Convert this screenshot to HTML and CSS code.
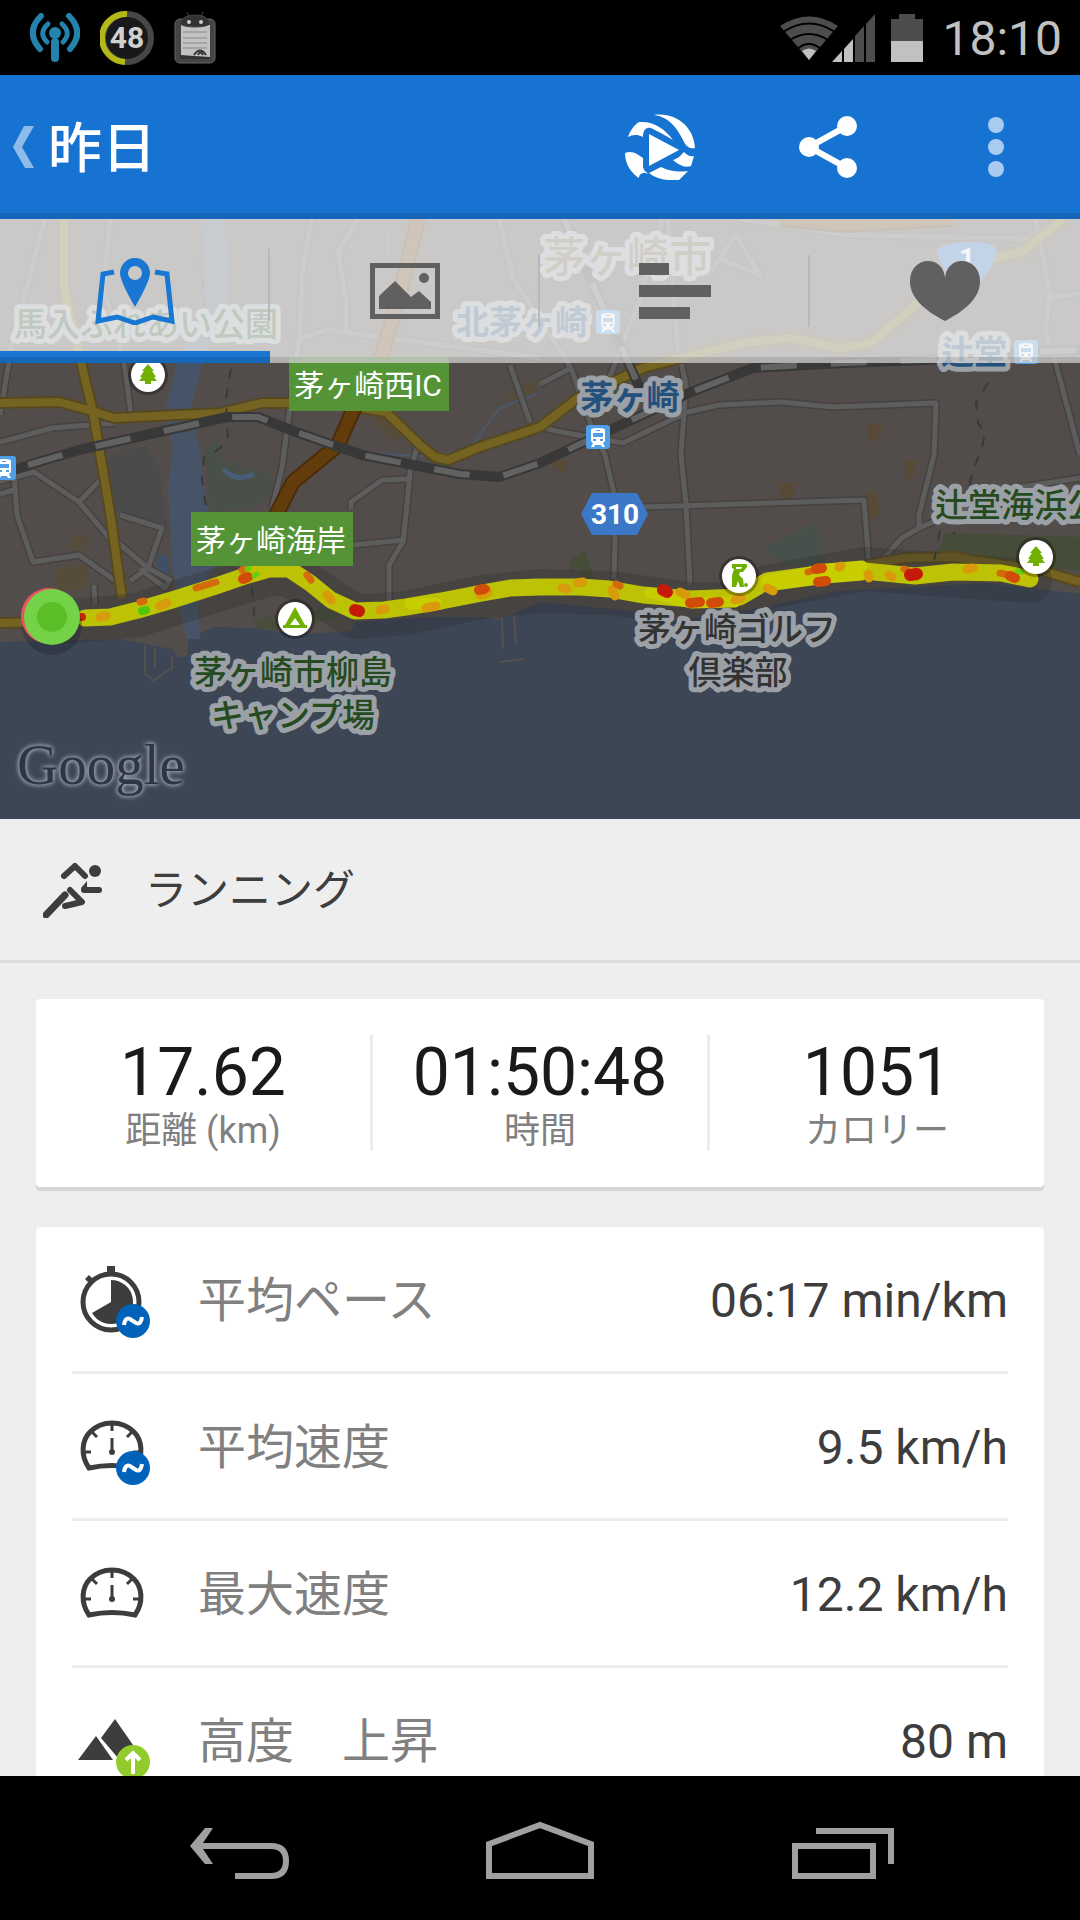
FILE: index.html
```
<!DOCTYPE html>
<html lang="ja">

<head>
  <meta charset="UTF-8">
  <meta name="viewport" content="width=device-width, initial-scale=1">
  <title>ランニング</title>
  <link rel="stylesheet" href="styles.css">
</head>

<body>

  <div class="statusbar">
    <div class="notifications">
      <svg width="50" height="50" viewBox="0 0 50 50" fill="none" stroke="#2483ad" stroke-linecap="round">
        <circle cx="25" cy="20" r="6" fill="#2483ad" stroke="none" />
        <path d="M25 29V45" stroke-width="8" />
        <path d="M18 11Q8 20 17 29M32 11Q42 20 33 29" stroke-width="5" />
        <path d="M11 3Q-5 19 10 36M39 3Q55 19 40 36" stroke-width="6" />
      </svg>
      <svg width="54" height="54" viewBox="0 0 54 54">
        <circle cx="27" cy="27" r="24" fill="#191919" stroke="#484648" stroke-width="6" />
        <path d="M27 3A24 24 0 0 0 25 51" fill="none" stroke="#b3b717" stroke-width="6" />
        <text class="battery-count" x="27" y="37" text-anchor="middle">48</text>
      </svg>
      <svg width="42" height="52" viewBox="0 0 42 52">
        <rect x="1" y="7" width="40" height="44" rx="5" fill="#444" stroke="#666" />
        <path d="M7 13h29v32H7z" fill="#c2c2c2" />
        <path d="M6 12Q8 3 21 3T36 12Q32 15 21 15T6 12ZM13 0l2 5M29 0l-2 5" fill="#333" stroke="#444" />
        <circle cx="15" cy="10" r="2" fill="#ccc" />
        <circle cx="27" cy="10" r="2" fill="#ccc" />
        <path d="M9 20h24M9 26h24M9 31h24M9 36h24" stroke="#888" />
        <path d="M20 43Q26 34 32 43M24 43Q26 38 29 43" fill="none" stroke="#333" stroke-width="2" />
        <path d="M6 43l30 2v2H6z" fill="#333" />
      </svg>
    </div>
    <div class="system">
      <svg width="96" height="48" viewBox="0 0 96 48">
        <path d="M29 46L0 12Q29 -7 58 12Z" fill="#4d4d4d" />
        <path d="M3 18Q29 1 55 18M10 26Q29 14 48 26M17 35Q29 25 41 35" fill="none" stroke="#000" stroke-width="2" />
        <path d="M29 46l-7-9q7-5 14 0z" fill="#c1c1c1" />
        <path d="M52 48l10-11v11zM64 48V35l9-10v23z" fill="#c1c1c1" />
        <path d="M75 48V22l9-10v36zM86 48V10l9-10v48z" fill="#4d4d4d" />
      </svg>
      <svg width="32" height="48" viewBox="0 0 32 48">
        <path d="M8 0h16v5h8v43H0V5h8z" fill="#4d4d4d" />
        <path d="M0 27h32v21H0z" fill="#c1c1c1" />
      </svg>
      <span class="clock">18:10</span>
    </div>
  </div>

  <header class="actionbar">
    <button class="back" aria-label="戻る">
      <svg width="22" height="42" viewBox="0 0 22 42"><path d="M11 0h10L9 21l12 21H12L0 21z" fill="#8fbbea" /></svg>
    </button>
    <h1>昨日</h1>
    <button class="action" aria-label="再生">
      <svg width="70" height="66" viewBox="0 0 70 66" fill="#fff">
        <path d="M29 1C51-2 69 13 70 34C65 35 61 33 58 26C51 12 43 3 29 1Z" />
        <path d="M3 23C5 17 9 11 14 8C29 7 40 15 48 26C40 21 32 17 26 14C20 13 18 17 18 23C12 20 7 21 3 23Z" />
        <path d="M0 39C8 36 13 41 18 44V53C19 57 21 58 24 60C19 58 14 59 14 64C6 59 0 50 0 39Z" />
        <path d="M24 59L36 53C46 58 54 58 63 57L54 66C42 67 31 65 24 59Z" />
        <path d="M48 46C54 44 56 41 59 38C62 41 65 43 69 42L66 52C59 54 54 51 48 46Z" />
        <path d="M24 20L54 36L24 52Z" />
      </svg>
    </button>
    <button class="action" aria-label="共有">
      <svg width="58" height="62" viewBox="0 0 58 62" fill="#fff">
        <path d="M48 10L10 31L48 52" fill="none" stroke="#fff" stroke-width="6" />
        <circle cx="48" cy="10" r="10" /><circle cx="10" cy="31" r="10" /><circle cx="48" cy="52" r="10" />
      </svg>
    </button>
    <button class="action" aria-label="メニュー">
      <svg width="16" height="60" viewBox="0 0 16 60" fill="#a9cbf1">
        <circle cx="8" cy="8" r="8" /><circle cx="8" cy="30" r="8" /><circle cx="8" cy="52" r="8" />
      </svg>
    </button>
  </header>

  <main>
    <section class="map">
      <svg class="map-canvas" viewBox="0 0 1080 600">
        <defs>
          <g id="train">
            <rect width="24" height="24" rx="3" fill="#4f9fe8" />
            <path d="M5 5q0-2 7-2t7 2v11l-2 2l2 4h-3l-1-2H9l-1 2H5l2-4l-2-2z" fill="#fff" />
            <path d="M7 8h10v4H7zM7 14h3v2H7zM14 14h3v2h-3zM10 5h4v1h-4z" fill="#4f9fe8" />
          </g>
          <g id="pin">
            <circle r="20" fill="#000" opacity=".3" />
            <circle r="17" fill="#fff" />
          </g>
          <path id="tree" d="M0-11L6-4H4L8 2H6L9 6H3V9H-3V6H-9L-6 2H-8L-4-4H-6Z" fill="#6fb000" />
          <g id="roads">
            <path d="M45 0L33 46L14 113L0 196M110 0L104 70L124 143L131 196M312 0L303 46L300 113L289 196L282 249L272 289" />
            <path d="M0 223L52 209L114 204M358 0L338 33L346 83V113M300 119L327 111L540 139M499 0L513 59L571 149L592 209L605 236L616 283L614 359" />
            <path d="M510 146L530 203M417 229L410 253L406 296L403 323L389 346V384M351 290V283L382 261L410 260M353 326L403 321" />
            <path d="M0 262L34 253L79 283L102 259M79 283L110 320M0 275L16 270M14 255L17 296L33 343L79 336L117 363M117 323L148 349L170 361L165 369L140 350M120 296L162 309L148 349L130 362M94 366L95 386" />
            <path d="M668 0L678 129L686 166L681 236L686 286L690 366M540 208L561 213L623 224L654 209L688 193L719 186L781 183L833 188L936 184L934 236L919 296" />
            <path d="M643 288L864 281L869 346M877 346L902 319L919 309L1015 269L1080 259M919 296V309M1036 0L1050 76L1045 110L1057 149L1080 236M1050 78L1080 75" />
            <path d="M712 52L736 16L760 56L719 39M609 160L640 80L662 0M540 165L571 149M740 0L850 16L1030 20" />
          </g>
          <path id="highways" d="M64 0V69L81 143L93 193L110 293L122 379M0 184L59 183L85 190L114 199L220 194L262 184H330L386 193L420 226L435 238L448 241L480 228L540 208L578 179L643 149L685 138L747 123L791 119L840 129L871 124L919 83L953 49L1022 33L1063 0M0 404L48 403M867 346L905 339L953 338L1039 351L1080 363" />
          <path id="tollways" d="M418 0L403 63L382 136L351 196L338 226L293 263L276 296M781 0L843 6L953 0" />
          <path id="railway" d="M28 246L79 231L155 214L227 198H258L296 213L362 236L413 246L460 255L499 258L540 244L578 226L636 199L691 173L753 149L843 144L926 141L1022 133L1080 131M564 0L602 86L643 176" />
        </defs>

        <!-- land, sea, river -->
        <rect width="1080" height="600" fill="#524d4a" />
        <path d="M0 423L120 420L143 425L172 430L179 439L187 437L188 419L215 408L255 409L296 416L351 412L355 403L430 398L482 398L499 401L540 383L643 393L671 403L691 399L760 389L836 372L988 364L1080 375V600H0Z" fill="#3c4655" />
        <path d="M201 0L206 60L200 100L177 143L165 193L173 229L168 270L172 346L186 420H200L197 375L213 350L208 296L200 229L190 193L203 143L227 80L229 40L224 0Z" fill="#475468" />
        <path d="M125 230L146 228L160 250L164 296L172 315L150 310L110 290L107 240Z" fill="#4a4b4a" />
        <path d="M205 230L218 220L222 240L270 255L278 270L250 290L210 293Z" fill="#485048" />
        <path d="M224 250q10 14 30 5" fill="none" stroke="#475e78" stroke-width="5" />
        <path d="M77 313l14 6-10 16-14-6zM55 350l35-5-5 25-28 3zM370 200l20-10 20 15-15 20zM510 170l28-9v15l-30 6z" fill="#574c38" opacity=".8" />
        <path d="M867 205h15v12l-14 6zM905 241h10v15l-10 6zM780 264h17l-5 14-13 6zM862 276l13-5 5 25-15 10zM550 245l20-5-8 15z" fill="#584a37" />
        <path d="M768 327L816 304L826 346L790 348L768 335Z" fill="#47504a" />
        <path d="M569 342l16-11 8 28-12 4-2-15-8 7zM945 314L1080 318V351L1040 350L938 332Z" fill="#454c38" />
        <path d="M255 400L330 389L340 396L290 412L255 409Z" fill="#484e3b" />
        <path d="M158 337h9l3 17h-12z" fill="#3e4f68" />
        <path d="M385 0q8 40 0 60M350 233l70 4l50-5q18-30 30-43l38-15" fill="none" stroke="#4b586b" stroke-width="2" />

        <g fill="none" stroke-linejoin="round">
          <!-- roads -->
          <use href="#roads" stroke="#45423f" stroke-width="8" />
          <use href="#roads" stroke="#5d5d5d" stroke-width="5" />
          <use href="#highways" stroke="#57491f" stroke-width="12" />
          <use href="#highways" stroke="#756322" stroke-width="8" />
          <use href="#tollways" stroke="#4a2c0a" stroke-width="16" />
          <use href="#tollways" stroke="#633c0b" stroke-width="12" />

          <!-- railway -->
          <path d="M0 255L30 246" stroke="#383838" stroke-width="10" />
          <use href="#railway" stroke="#383838" stroke-width="10" />
          <use href="#railway" stroke="#626262" stroke-width="6" stroke-dasharray="36 34" />
          <path d="M231 150L226 180L228 222L216 232L204 238L202 260L207 296M200 40L208 120M252 368l3 40M988 164l-12 20 2 20 7 10-3 15-8 20-6 22-12 25-2 20M940 312l-6 30" stroke="#393a3c" stroke-width="2" stroke-dasharray="10 10" />
          <path d="M145 427V455L152 460M155 430V449M172 437V449L152 462M502 400L503 430M514 396L516 425M500 443l24-3" stroke="#55524e" stroke-width="2" />
        </g>

        <!-- route, coloured by pace -->
        <g fill="none" stroke-linejoin="round" stroke-linecap="round">
          <path d="M50 404L138 396L172 385L269 355H289L310 368L355 398L406 394L482 378L540 372L609 374L691 385L740 385L767 368L864 350L1030 362" stroke="#302e2e" stroke-width="44" opacity=".3" />
          <path d="M85 399L110 398L138 391L172 381L213 368L248 356L269 350H289L310 364L331 381L355 392L384 391L406 388L441 382L482 374L510 369L540 368L580 368L609 370L643 376L691 380L740 378L767 362L826 354L864 352L915 357L953 353L1001 354L1030 360" stroke="#bdc204" stroke-width="17" />
          <path d="M767 367L826 359L862 356M767 362L826 350L862 347M650 374L691 384L735 383M410 385L436 384" stroke="#c8cd00" stroke-width="11" />
          <path d="M100 398l6-1M160 387l7-3M327 376l4 5M380 391l5-1M426 389l10-2M480 376l8-2M562 369l5 1M577 364l6-1M612 371l3 6M680 373l6 3M735 381l6-2M767 369l6 3M839 348l2-1M868 355l1 4M889 356l3 2M967 350l6-1" stroke="#d79b0c" stroke-width="9" />
          <path d="M196 369l20-6M242 351l2-1M307 356l4 5M140 383l4-1M484 371l3-1M616 365l4 2M808 353l10-3M1000 354l8 2M904 350l3 1" stroke="#d46b0a" stroke-width="7" />
          <path d="M243 360l5-2M479 371l5-1M690 384l10-1M711 384l8-1M816 350l6-1M818 363l8-1M1010 357l5 2" stroke="#d04c08" stroke-width="10" />
          <path d="M355 391l4 1M663 371l4 2M910 356l7-1" stroke="#c61a08" stroke-width="12" />
          <path d="M142 392l4-1" stroke="#4fc80c" stroke-width="8" />
          <path d="M247 350l2-1M254 357l3-2M1017 352l5 1" stroke="#68cc10" stroke-width="5" />
          <path d="M80 398h2" stroke="#c92608" stroke-width="8" />
        </g>
        <circle cx="52" cy="406" r="30" fill="#1c222c" opacity=".35" />
        <circle cx="49" cy="397" r="28" fill="#ec5362" />
        <circle cx="52" cy="398" r="28" fill="#73d247" />
        <circle cx="52" cy="398" r="15" fill="#5abf27" />

        <!-- markers -->
        <use href="#train" x="-8" y="237" />
        <use href="#train" x="586" y="206" />
        <use href="#train" x="596" y="91" />
        <use href="#train" x="1014" y="121" />
        <use href="#pin" x="148" y="156" /><use href="#tree" x="148" y="156" />
        <use href="#pin" x="1036" y="338" /><use href="#tree" x="1036" y="338" />
        <use href="#pin" x="295" y="400" />
        <path d="M295 388L305 406H307V409H283V406H285ZM295 399L290 406H300Z" fill="#6fb000" fill-rule="evenodd" />
        <use href="#pin" x="739" y="357" />
        <path d="M732 345h15v3l-4 5h-3l-1 3 4 4 1 8h-4l-2-6-2 6h-4v-12l2-6-2-1zM736 348v2h5l1-2z" fill="#6fb000" fill-rule="evenodd" />
        <circle cx="746" cy="366" r="2" fill="#6fb000" />
        <path d="M592 274h45l11 21-11 21h-45l-11-21z" fill="#3b78c8" />
        <text class="shield" x="615" y="305">310</text>
        <path d="M937 34q0-10 30-11t30 11q-5 20-30 42q-25-22-30-42z" fill="#3b78c8" />
        <text class="shield" x="967" y="49">1</text>
        <rect x="289" y="138" width="160" height="54" fill="#549436" />
        <text class="exit" x="368" y="177">茅ヶ崎西IC</text>
        <rect x="191" y="293" width="162" height="54" fill="#549436" />
        <text class="exit" x="271" y="332">茅ヶ崎海岸</text>

        <!-- place names -->
        <text class="place city" x="627" y="53">茅ヶ崎市</text>
        <text class="place station" x="522" y="115">北茅ヶ崎</text>
        <text class="place station" x="630" y="190">茅ヶ崎</text>
        <text class="place station" x="974" y="145">辻堂</text>
        <text class="place park" x="146" y="117">馬入ふれあい公園</text>
        <text class="place park" x="1034" y="298">辻堂海浜公園</text>
        <text class="place park" x="293" y="465">茅ヶ崎市柳島</text>
        <text class="place park" x="293" y="508">キャンプ場</text>
        <text class="place" x="737" y="422">茅ヶ崎ゴルフ</text>
        <text class="place" x="738" y="465">倶楽部</text>
        <text class="google" x="17" y="565">Google</text>
      </svg>

      <nav class="tabs">
        <button class="tab active" aria-label="マップ">
          <svg width="80" height="68" viewBox="0 0 80 68">
            <path d="M19 15L8 17L3 64L22 60L40 66L58 60L77 64L72 17L60 15" fill="none" stroke="#1976d2" stroke-width="5" />
            <path d="M40 1a15 15 0 0 1 15 15q0 8-15 34q-15-26-15-34a15 15 0 0 1 15-15zm0 8a7 7 0 1 0 0 14a7 7 0 1 0 0-14z" fill="#1976d2" fill-rule="evenodd" />
          </svg>
        </button>
        <button class="tab" aria-label="写真">
          <svg width="70" height="56" viewBox="0 0 70 56" fill="#606060">
            <path d="M0 0h70v56H0zM5 5v46h60V5z" fill-rule="evenodd" />
            <path d="M9 46V33L25 18L41 34L49 28L61 39V46z" />
            <circle cx="54" cy="15" r="5" />
          </svg>
        </button>
        <button class="tab" aria-label="統計">
          <svg width="72" height="56" viewBox="0 0 72 56" fill="#606060">
            <path d="M0 0h30v12H0zM0 22h72v12H0zM0 44h51v12H0z" />
          </svg>
        </button>
        <button class="tab" aria-label="心拍">
          <svg width="70" height="60" viewBox="0 0 70 60" fill="#606060">
            <path d="M35 60C20 52 0 40 0 20C0 8 8 0 18 0C27 0 34 6 35 17C36 6 43 0 52 0C62 0 70 8 70 20C70 40 50 52 35 60Z" />
          </svg>
        </button>
      </nav>
    </section>

    <section class="sport">
      <svg width="60" height="56" viewBox="0 0 60 56" fill="none" stroke="#3d3d3d" stroke-width="6" stroke-linecap="round" stroke-linejoin="round">
        <path d="M21 14L32 4L42 14M27 28L39 40L22 44" />
        <path d="M41 28H56" />
        <path d="M3 53L22 33" stroke-width="7" />
        <path d="M38 26l6-7v12z" fill="#3d3d3d" stroke="none" />
        <circle cx="52" cy="9" r="6" fill="#3d3d3d" stroke="none" />
      </svg>
      <h2>ランニング</h2>
    </section>

    <section class="card summary">
      <div class="stat"><strong>17.62</strong><span>距離 (km)</span></div>
      <div class="stat"><strong>01:50:48</strong><span>時間</span></div>
      <div class="stat"><strong>1051</strong><span>カロリー</span></div>
    </section>

    <section class="card">
      <table class="details">
        <tr>
          <td class="icon">
            <svg width="80" height="80" viewBox="0 0 80 80">
              <circle cx="39" cy="43" r="28" fill="none" stroke="#3d3d3d" stroke-width="5" />
              <path d="M35 7h8v8h-8zM13 20l4-4 5 5-4 4z" fill="#3d3d3d" />
              <path d="M39 43V21A22 22 0 1 1 20 54Z" fill="#3d3d3d" />
              <g id="average">
                <circle cx="61" cy="62" r="17" fill="#0062b8" />
                <path d="M52 66Q53 58 58 60L64 64Q69 66 70 58" fill="none" stroke="#fff" stroke-width="4" />
              </g>
            </svg>
          </td>
          <th>平均ペース</th>
          <td class="value">06:17 min/km</td>
        </tr>
        <tr>
          <td class="icon">
            <svg width="80" height="80" viewBox="0 0 80 80">
              <g id="gauge" fill="none" stroke="#3d3d3d">
                <path d="M17 62C8 49 10 34 18 26C30 14 50 14 62 26C70 34 72 49 63 62Q40 57 17 62Z" stroke-width="5" />
                <path d="M40 18v7M20 26l5 5M60 26l-5 5M11 46h8M69 46h-8M40 32v14" stroke-width="3" />
                <circle cx="40" cy="46" r="3" fill="#3d3d3d" stroke="none" />
              </g>
              <use href="#average" />
            </svg>
          </td>
          <th>平均速度</th>
          <td class="value">9.5 km/h</td>
        </tr>
        <tr>
          <td class="icon">
            <svg width="80" height="80" viewBox="0 0 80 80"><use href="#gauge" /></svg>
          </td>
          <th>最大速度</th>
          <td class="value">12.2 km/h</td>
        </tr>
        <tr>
          <td class="icon">
            <svg width="80" height="80" viewBox="0 0 80 80">
              <path d="M6 60L24 36L41 60ZM43 19L70 58H46L29 38Z" fill="#3d3d3d" />
              <circle cx="61" cy="62" r="17" fill="#91cc2c" />
              <path d="M61 74V54M54 60L61 53L68 60" fill="none" stroke="#fff" stroke-width="4" />
            </svg>
          </td>
          <th>高度　上昇</th>
          <td class="value">80 m</td>
        </tr>
      </table>
    </section>
  </main>

  <footer class="navbar">
    <button aria-label="戻る">
      <svg width="100" height="58" viewBox="0 0 100 58" fill="none" stroke="#a0a0a0" stroke-width="6">
        <path d="M4 25H81Q96 25 96 40T81 55H45" />
        <path d="M15 7h8L11 25l12 18h-8L0 25z" fill="#a0a0a0" stroke="none" />
      </svg>
    </button>
    <button aria-label="ホーム">
      <svg width="108" height="58" viewBox="0 0 108 58" fill="none" stroke="#a0a0a0" stroke-width="6">
        <path d="M3 55V23L54 4L105 23V55Z" />
      </svg>
    </button>
    <button aria-label="履歴">
      <svg width="108" height="58" viewBox="0 0 108 58" fill="none" stroke="#a0a0a0" stroke-width="6">
        <path d="M9 25H87V55H9ZM30 10H105V43" />
      </svg>
    </button>
  </footer>

</body>

</html>
```

FILE: styles.css
```
* {
  box-sizing: border-box;
}

body {
  margin: 0;
  height: 100vh;
  display: flex;
  flex-direction: column;
  background-color: #eee;
  color: #3d3d3d;
  font-family: Roboto, "Noto Sans CJK JP", sans-serif;
}

svg {
  display: block;
}

button {
  display: flex;
  align-items: center;
  justify-content: center;
  padding: 0;
  border: 0;
  background: none;
}

/* status bar */
.statusbar {
  flex: none;
  display: flex;
  justify-content: space-between;
  align-items: center;
  height: 75px;
  padding: 0 18px 0 30px;
  background-color: #000;
}

.notifications {
  display: flex;
  align-items: center;
  gap: 20px;
}

.battery-count {
  fill: #d0d0d0;
  font-size: 30px;
  font-weight: bold;
}

.system {
  display: flex;
  align-items: center;
  gap: 15px;
}

.clock {
  padding-top: 3px;
  margin-left: 4px;
  color: #c1c1c1;
  font-size: 48px;
  line-height: 72px;
}

/* action bar */
.actionbar {
  flex: none;
  display: flex;
  align-items: stretch;
  height: 144px;
  background-color: #1773d1;
  border-bottom: 6px solid #1565bb;
}

.back {
  width: 48px;
  padding-top: 6px;
}

h1 {
  flex: 1;
  margin: 0;
  padding-top: 6px;
  color: #fff;
  font-size: 54px;
  font-weight: 500;
  line-height: 138px;
}

.action {
  width: 168px;
  padding-top: 6px;
}

main {
  flex: 1;
  min-height: 0;
  overflow: hidden;
}

/* map */
.map {
  position: relative;
}

.map-canvas {
  width: 100%;
  height: auto;
}

.place {
  fill: #333;
  stroke: #9ca1a8;
  stroke-width: 10px;
  stroke-linejoin: round;
  paint-order: stroke;
  font-size: 33px;
  font-weight: 500;
  text-anchor: middle;
}

.park {
  fill: #264b21;
}

.station {
  fill: #24507c;
  font-weight: 700;
}

.city {
  fill: #6b6149;
  font-size: 42px;
}

.exit {
  fill: #fff;
  font-size: 30px;
  text-anchor: middle;
}

.shield {
  fill: #fff;
  font-size: 28px;
  font-weight: bold;
  text-anchor: middle;
}

/* the logo has a light glow */
.google {
  fill: #2d3644;
  font-family: "Liberation Serif", serif;
  font-size: 57px;
  filter: drop-shadow(0 0 2px #aab0b9) drop-shadow(0 0 2px #8a919c);
}

.tabs {
  position: absolute;
  top: 0;
  left: 0;
  right: 0;
  display: flex;
  height: 144px;
  background-color: rgba(243, 243, 243, 0.75);
}

.tabs::after {
  content: "";
  position: absolute;
  left: 0;
  right: 0;
  bottom: 0;
  height: 6px;
  background-color: rgba(0, 0, 0, 0.12);
}

.tab {
  flex: 1;
  background: linear-gradient(#b9b8b8, #b9b8b8) right center / 2px 72px no-repeat;
}

.tab:last-child {
  background: none;
}

.tab.active {
  padding-top: 12px;
  border-bottom: 12px solid #1976d2;
}

/* sport type */
.sport {
  display: flex;
  align-items: center;
  gap: 42px;
  height: 144px;
  padding-left: 43px;
  border-bottom: 3px solid #dcdcdc;
}

h2 {
  margin: 0;
  padding-top: 2px;
  font-size: 42px;
  font-weight: normal;
  line-height: 60px;
}

/* cards */
.card {
  margin: 36px 36px 0;
  background-color: #fff;
  border-radius: 4px;
  box-shadow: 0 4px 0 #d6d6d6;
}

.card + .card {
  margin-top: 40px;
}

.summary {
  display: flex;
  padding: 36px 0;
}

.stat {
  flex: 1;
  display: flex;
  flex-direction: column;
  align-items: center;
}

.stat + .stat {
  border-left: 3px solid #ededed;
}

.stat strong {
  color: #1a1a1a;
  font-size: 66px;
  font-weight: normal;
  line-height: 76px;
}

.stat span {
  color: #808080;
  font-size: 36px;
  line-height: 40px;
}

.details {
  width: calc(100% - 72px);
  margin: 0 36px;
  border-collapse: separate;
  border-spacing: 0;
  font-size: 48px;
  line-height: 60px;
}

.details td,
.details th {
  height: 147px;
  padding: 0;
  border-bottom: 3px solid #ededed;
}

.details .icon {
  width: 126px;
}

.details th {
  padding-top: 4px;
  color: #808080;
  font-weight: normal;
  text-align: left;
}

.details .value {
  padding-top: 4px;
  text-align: right;
}

/* navigation bar */
.navbar {
  flex: none;
  display: flex;
  justify-content: space-between;
  height: 144px;
  padding: 4px 90px 0;
  background-color: #000;
}

.navbar button {
  width: 300px;
}
```
